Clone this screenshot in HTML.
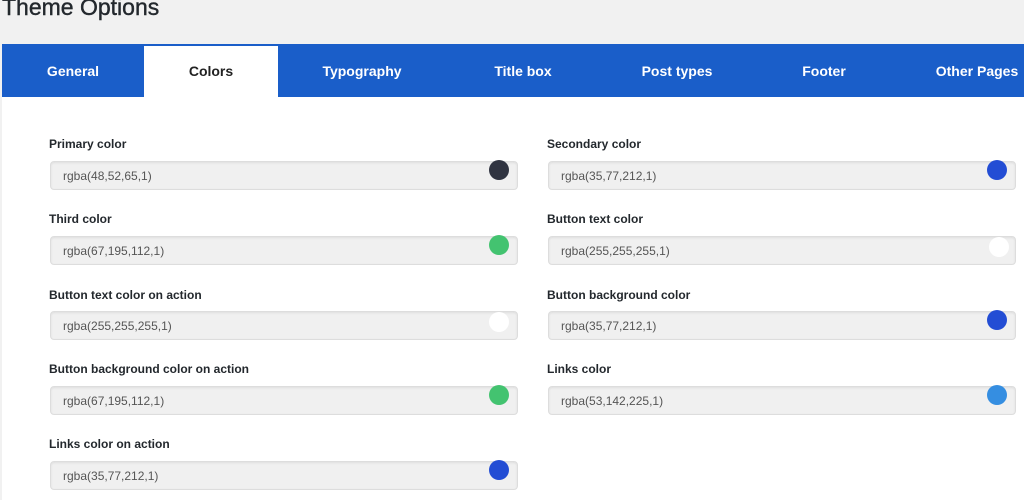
<!DOCTYPE html>
<html><head><style>
body{margin:0;width:1024px;height:500px;overflow:hidden;background:#f1f1f1;font-family:"Liberation Sans",sans-serif;position:relative}
h1{position:absolute;left:2px;top:-6px;margin:0;font-size:23px;font-weight:normal;color:#23282d;-webkit-text-stroke:0.4px #23282d}
.bar{position:absolute;left:2px;top:44px;width:1022px;height:53px;background:#1a5ec9}
.tab{position:absolute;top:44px;height:53px;line-height:55px;color:#fff;font-weight:bold;font-size:14px;transform:translateX(-50%);white-space:nowrap}
.act{position:absolute;left:144px;top:46px;width:134px;height:51px;background:#fff}
.panel{position:absolute;left:2px;top:97px;width:1022px;height:403px;background:#fff}
.lab{position:absolute;font-weight:bold;font-size:12px;color:#23282d}
.inp{position:absolute;width:468px;height:29px;background:#f0f0f0;border:1px solid #ddd;border-radius:4px;box-shadow:inset 0 1px 2px rgba(0,0,0,.08);box-sizing:border-box;font-size:12px;color:#555;line-height:29px;padding-left:12px}
.dot{position:absolute;right:8px;top:-2px;width:20px;height:20px;border-radius:50%}
</style></head><body>
<h1>Theme Options</h1>
<div class="bar"></div>
<div class="act"></div>
<div class="tab" style="left:73px">General</div>
<div class="tab" style="left:211px;color:#222">Colors</div>
<div class="tab" style="left:362px">Typography</div>
<div class="tab" style="left:523px">Title box</div>
<div class="tab" style="left:677px">Post types</div>
<div class="tab" style="left:824px">Footer</div>
<div class="tab" style="left:977px">Other Pages</div>
<div class="panel"></div>

<div class="lab" style="left:49px;top:137px">Primary color</div>
<div class="inp" style="left:50px;top:161px">rgba(48,52,65,1)<div class="dot" style="background:#303441"></div></div>
<div class="lab" style="left:547px;top:137px">Secondary color</div>
<div class="inp" style="left:548px;top:161px">rgba(35,77,212,1)<div class="dot" style="background:#234dd4"></div></div>

<div class="lab" style="left:49px;top:212px">Third color</div>
<div class="inp" style="left:50px;top:236px">rgba(67,195,112,1)<div class="dot" style="background:#43c370"></div></div>
<div class="lab" style="left:547px;top:212px">Button text color</div>
<div class="inp" style="left:548px;top:236px">rgba(255,255,255,1)<div class="dot" style="background:#fff;right:6px;top:0px"></div></div>

<div class="lab" style="left:49px;top:288px">Button text color on action</div>
<div class="inp" style="left:50px;top:311px">rgba(255,255,255,1)<div class="dot" style="background:#fff;top:0px"></div></div>
<div class="lab" style="left:547px;top:288px">Button background color</div>
<div class="inp" style="left:548px;top:311px">rgba(35,77,212,1)<div class="dot" style="background:#234dd4"></div></div>

<div class="lab" style="left:49px;top:362px">Button background color on action</div>
<div class="inp" style="left:50px;top:386px">rgba(67,195,112,1)<div class="dot" style="background:#43c370"></div></div>
<div class="lab" style="left:547px;top:362px">Links color</div>
<div class="inp" style="left:548px;top:386px">rgba(53,142,225,1)<div class="dot" style="background:#358ee1"></div></div>

<div class="lab" style="left:49px;top:437px">Links color on action</div>
<div class="inp" style="left:50px;top:461px">rgba(35,77,212,1)<div class="dot" style="background:#234dd4"></div></div>
</body></html>
